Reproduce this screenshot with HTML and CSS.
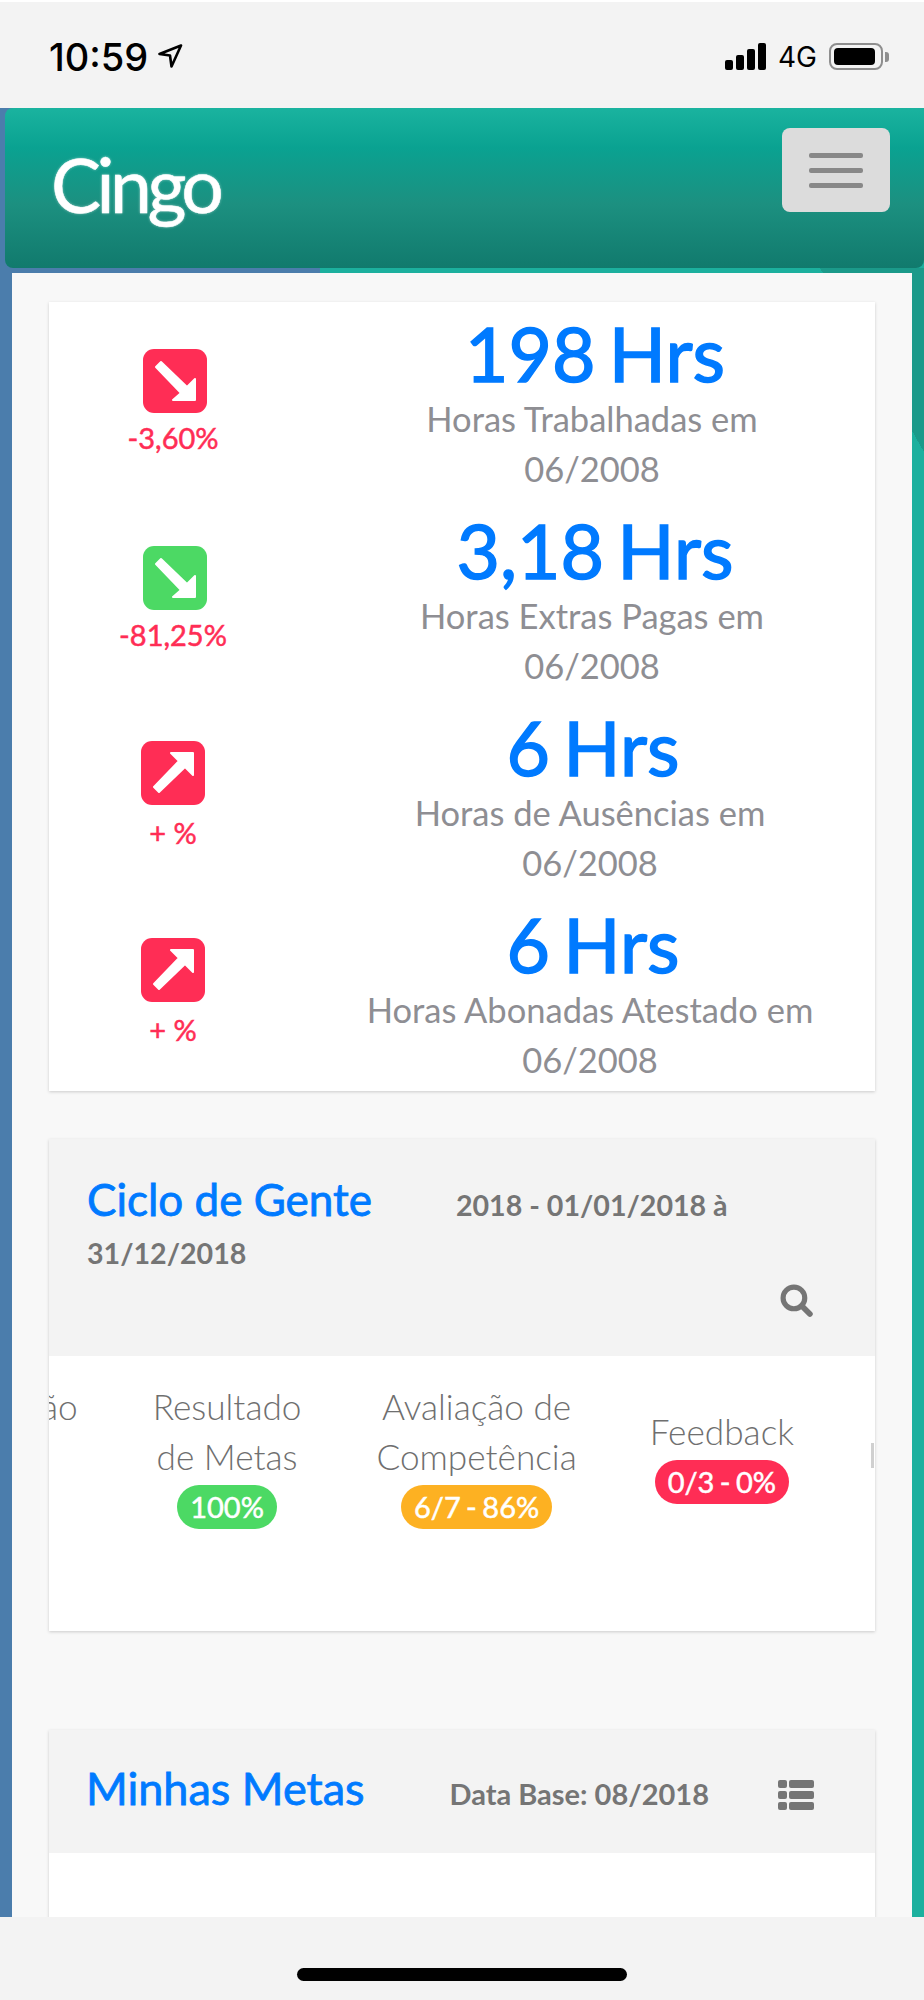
FILE: index.html

```html
<!DOCTYPE html>
<html lang="pt-BR">
<head>
    <meta charset="UTF-8">
    <title>Cingo</title>
    <meta name="viewport" content="width=device-width, initial-scale=1.0">
    <link rel="stylesheet" href="styles.css">
</head>
<body>

<div class="status-bar">
    <div class="status-left">
        <span class="clock">10:59</span>
        <svg class="loc-icon" viewBox="0 0 25 24"><path d="M23 1.500 L1.500 10 L12 11.500 L13.500 22.500 Z" fill="none" stroke="#000" stroke-width="2.600" stroke-linejoin="round"/></svg>
    </div>
    <div class="status-right">
        <div class="signal"><i class="b1"></i><i class="b2"></i><i class="b3"></i><i class="b4"></i></div>
        <span class="net">4G</span>
        <div class="battery"><div class="battery-fill"></div></div>
        <div class="battery-tip"></div>
    </div>
</div>

<div class="app">
    <header class="topbar">
        <span class="logo">Cingo</span>
        <button class="menu-btn"><i></i><i></i><i></i></button>
    </header>

    <main class="content">
        <section class="card stats">
            <div class="stat">
                <div class="trend">
                    <span class="trend-icon red"><svg viewBox="0 0 64 64"><path d="M13 18 L18 13 L44 38 L52 30 L52 51 L30 51 L38 44 Z" fill="#fff" stroke="#fff" stroke-width="2" stroke-linejoin="round"/></svg></span>
                    <span class="trend-val">-3,60%</span>
                </div>
                <div class="stat-main">
                    <div class="stat-num">198 Hrs</div>
                    <div class="stat-label">Horas Trabalhadas em<br>06/2008</div>
                </div>
            </div>
            <div class="stat">
                <div class="trend">
                    <span class="trend-icon green"><svg viewBox="0 0 64 64"><path d="M13 18 L18 13 L44 38 L52 30 L52 51 L30 51 L38 44 Z" fill="#fff" stroke="#fff" stroke-width="2" stroke-linejoin="round"/></svg></span>
                    <span class="trend-val">-81,25%</span>
                </div>
                <div class="stat-main">
                    <div class="stat-num">3,18 Hrs</div>
                    <div class="stat-label">Horas Extras Pagas em<br>06/2008</div>
                </div>
            </div>
            <div class="stat up">
                <div class="trend">
                    <span class="trend-icon red"><svg viewBox="0 0 64 64"><path d="M13 46 L18 51 L44 26 L52 34 L52 12 L30 12 L38 20 Z" fill="#fff" stroke="#fff" stroke-width="2" stroke-linejoin="round"/></svg></span>
                    <span class="trend-val">+ %</span>
                </div>
                <div class="stat-main">
                    <div class="stat-num">6 Hrs</div>
                    <div class="stat-label">Horas de Ausências em<br>06/2008</div>
                </div>
            </div>
            <div class="stat up">
                <div class="trend">
                    <span class="trend-icon red"><svg viewBox="0 0 64 64"><path d="M13 46 L18 51 L44 26 L52 34 L52 12 L30 12 L38 20 Z" fill="#fff" stroke="#fff" stroke-width="2" stroke-linejoin="round"/></svg></span>
                    <span class="trend-val">+ %</span>
                </div>
                <div class="stat-main">
                    <div class="stat-num">6 Hrs</div>
                    <div class="stat-label">Horas Abonadas Atestado em<br>06/2008</div>
                </div>
            </div>
        </section>

        <section class="card ciclo">
            <div class="card-head ciclo-head">
                <div class="ciclo-text"><span class="card-title">Ciclo de Gente</span><span class="card-date first">2018 - 01/01/2018 à</span><br><span class="card-date">31/12/2018</span></div>
                <svg class="search" viewBox="0 0 32 32"><circle cx="13.500" cy="13.500" r="10.500" fill="none" stroke="#757575" stroke-width="5"/><path d="M21 21 L29 29" stroke="#757575" stroke-width="5.500" stroke-linecap="round"/></svg>
            </div>
            <div class="steps">
                <div class="step step-cut">ão</div>
                <div class="step">Resultado<br>de Metas<span class="pill green">100%</span></div>
                <div class="step">Avaliação de<br>Competência<span class="pill orange">6/7 - 86%</span></div>
                <div class="step step-fb">Feedback<span class="pill red">0/3 - 0%</span></div>
                <i class="step-stub"></i>
            </div>
        </section>

        <section class="card metas">
            <div class="card-head metas-head">
                <span class="card-title">Minhas Metas</span>
                <span class="card-date">Data Base: 08/2018</span>
                <svg class="list" viewBox="0 0 36 30"><g fill="#757575"><rect x="0" y="0" width="9" height="8" rx="2"/><rect x="11" y="0" width="25" height="8" rx="2"/><rect x="0" y="11" width="9" height="8" rx="2"/><rect x="11" y="11" width="25" height="8" rx="2"/><rect x="0" y="22" width="9" height="8" rx="2"/><rect x="11" y="22" width="25" height="8" rx="2"/></g></svg>
            </div>
            <div class="metas-body"></div>
        </section>
    </main>
</div>

<div class="home-bar"><div class="home-indicator"></div></div>

</body>
</html>
```

FILE: styles.css

```css
* { box-sizing: border-box; }
html, body { margin: 0; padding: 0; }
body { width: 924px; height: 2000px; display: flex; flex-direction: column; overflow: hidden; background: #f3f3f3; font-family: Lato, "Open Sans", sans-serif; }

/* phone chrome */
.status-bar { height: 108px; flex: none; display: flex; justify-content: space-between; padding: 40px 35px 0 49px; background: #f3f3f3; border-top: 2px solid #fff; font-family: Inter, "Liberation Sans", sans-serif; color: #000; }
.status-left { display: flex; align-items: flex-start; }
.clock { font-size: 38px; line-height: 30px; font-weight: 500; }
.loc-icon { width: 25px; height: 24px; margin: 2px 0 0 10px; }
.status-right { display: flex; align-items: flex-start; }
.signal { display: flex; align-items: flex-end; gap: 3px; height: 27px; margin-top: 1px; }
.signal i { display: block; width: 8px; background: #000; border-radius: 2px; }
.signal .b1 { height: 10px; }
.signal .b2 { height: 15px; }
.signal .b3 { height: 21px; }
.signal .b4 { height: 27px; }
.net { font-size: 28px; line-height: 28px; margin: 1px 0 0 12px; }
.battery { width: 54px; height: 27px; margin: 1px 0 0 12px; padding: 3px 6px 3px 3px; border: 2px solid #8e8e8e; border-radius: 8px; }
.battery-fill { height: 100%; background: #000; border-radius: 4px; }
.battery-tip { width: 4px; height: 10px; margin: 10px 0 0 2px; background: #8e8e8e; border-radius: 0 3px 3px 0; }

.home-bar { height: 83px; flex: none; display: flex; justify-content: center; padding-top: 51px; background: #f3f3f3; }
.home-indicator { width: 330px; height: 13px; background: #000; border-radius: 7px; }

/* app frame, the strips on both sides are what shows behind the content */
.app { flex: 1; min-height: 0; display: flex; flex-direction: column; overflow: hidden; background: linear-gradient(to top right, rgba(27,154,138,0) 50%, #1b9a8a 50%) right 0 top 160px / 104px 184px no-repeat, linear-gradient(90deg, #4b7dac 0, #4b7dac 320px, #1cb09e 320px, #1cb09e 100%); }
.topbar { height: 160px; flex: none; margin-left: 5px; display: flex; justify-content: space-between; align-items: flex-start; padding: 20px 34px 0 46px; background: linear-gradient(180deg, #1ab39f 0, #0aa291 25%, #1c9080 60%, #117a6d 100%); border-radius: 8px; }
.logo { font-size: 75px; line-height: 100px; letter-spacing: -4.500px; color: #fff; margin-top: 6px; -webkit-text-stroke: 0.500px #fff; text-shadow: 0 0 3px rgba(255,255,255,0.6); }
.menu-btn { width: 108px; height: 84px; padding: 0; display: flex; flex-direction: column; align-items: center; justify-content: center; gap: 10px; background: #dcdcdc; border: none; border-radius: 8px; }
.menu-btn i { display: block; width: 54px; height: 5px; background: #888; border-radius: 2px; }

.content { flex: 1; min-height: 0; overflow: hidden; margin: 5px 12px 0; padding: 29px 37px 0; background: #f8f8f8; }

.card { background: #fff; box-shadow: 0 1px 3px rgba(0,0,0,0.18); }

/* stats */
.stats { height: 789px; }
.stat { height: 197px; display: flex; }
.trend { width: 252px; flex: none; display: flex; flex-direction: column; align-items: center; padding-top: 47px; }
.stat.up .trend { padding-top: 45px; width: 248px; }
.trend-icon { width: 64px; height: 64px; border-radius: 11px; display: block; }
.trend-icon svg { display: block; width: 64px; height: 64px; }
.trend-icon.red { background: #ff2d55; }
.trend-icon.green { background: #4cd964; }
.trend-val { font-size: 29px; line-height: 32px; color: #ff2d55; -webkit-text-stroke: 0.500px #ff2d55; margin: 9px 4px 0 0; }
.stat.up .trend-val { margin: 12px 0 0; }
.stat-main { flex: 1; text-align: center; padding-left: 14px; }
.stat-num { font-size: 75px; line-height: 88px; word-spacing: -6px; color: #007aff; -webkit-text-stroke: 1.500px #007aff; margin-top: 7px; }
.stat-label { font-size: 34.500px; line-height: 50px; color: #8e8e93; margin: -3px 6px 0 0; }

/* section cards */
.card-head { background: #f3f3f3; color: #757575; }
.card-title { font-size: 44px; line-height: 48px; color: #007aff; -webkit-text-stroke: 0.800px #007aff; }
.card-date { font-size: 28.600px; line-height: 30px; font-weight: 700; color: #757575; }

.ciclo { margin-top: 48px; height: 492px; }
.ciclo-head { height: 217px; padding: 36px 24px 0 38px; }
.ciclo-text { line-height: 48px; }
.card-date.first { margin-left: 84px; }
.search { display: block; width: 33px; height: 33px; margin: 2px 38px 0 auto; }

/* strip is scrolled sideways, the card edge cuts it on both ends */
.steps { height: 275px; display: flex; align-items: center; gap: 75px; padding: 25px 0 102px; overflow: hidden; white-space: nowrap; font-size: 35.200px; line-height: 50px; color: #6f6f6f; font-weight: 300; text-align: center; }
.step { flex: none; }
.step-cut { align-self: flex-start; margin-left: -8px; }
.step-fb { margin-left: -2px; }
.step-stub { flex: none; width: 3px; height: 25px; margin-left: 2px; background: #d0d0d0; }
.pill { display: table; margin: 4px auto 0; padding: 0 13px; font-size: 29px; line-height: 44px; word-spacing: -2px; font-weight: 400; color: #fff; -webkit-text-stroke: 0.500px #fff; border-radius: 22px; }
.pill.green { background: #4cd964; }
.pill.orange { background: #fdb122; }
.pill.red { background: #ff2d55; }

.metas { margin-top: 99px; }
.metas-head { height: 123px; padding: 0 61px 0 37px; display: flex; align-items: center; justify-content: space-between; }
.metas-head .card-title { font-size: 45px; margin-top: -8px; }
.metas-head .card-date { font-size: 29px; margin: 5px 0 0 16px; }
.list { width: 36px; height: 30px; margin-top: 6px; }
.metas-body { height: 200px; background: #fff; }
```
